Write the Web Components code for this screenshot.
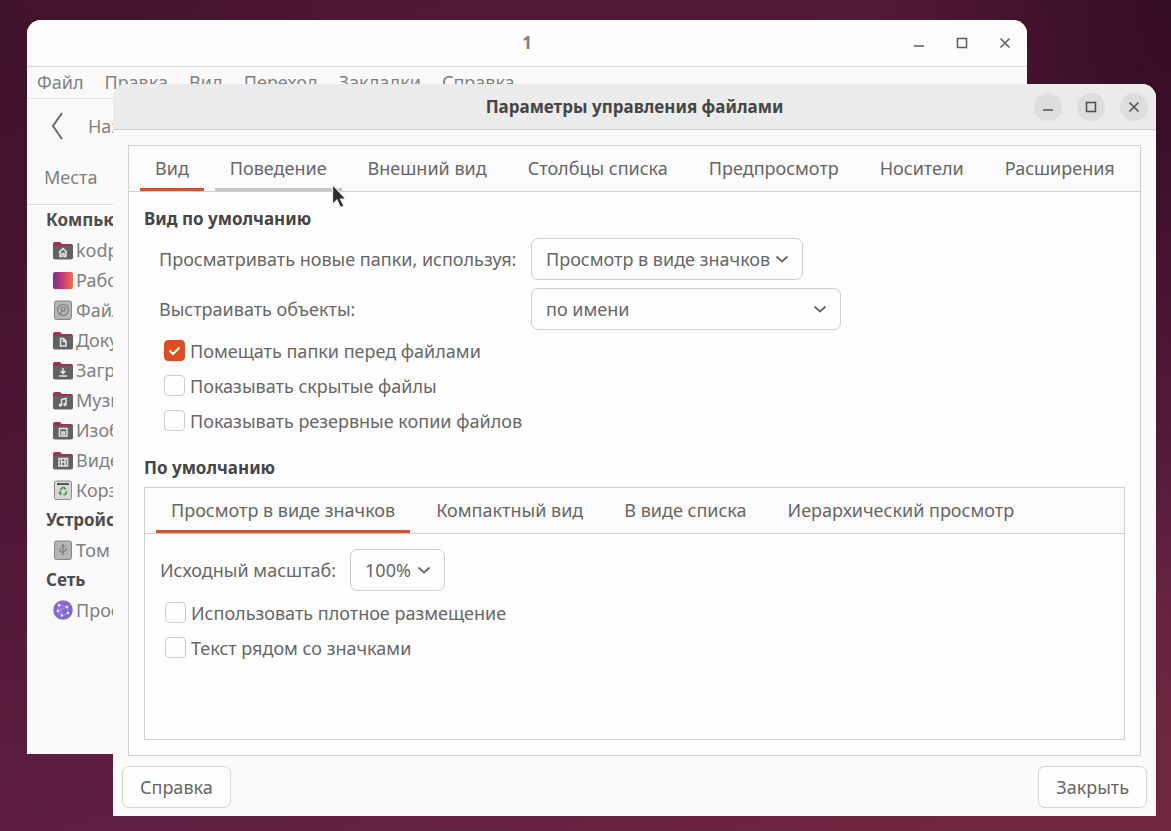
<!DOCTYPE html>
<html lang="ru">
<head>
<meta charset="utf-8">
<title>Параметры управления файлами</title>
<style>
  html, body { height: 100%; margin: 0; }
  body {
    overflow: hidden;
    font: 18px/24px "Noto Sans", "Open Sans", sans-serif;
    --heading-size: 17px;
    --ink: #666666;
    --ink-strong: #454545;
    --ink-back: #808080;
    --line: #d0d0d0;
    --accent: #c9553a;
    --check: #dd4f22;
    color: var(--ink);
  }
</style>
</head>
<body>
<ubuntu-desktop>
  <desktop-window class="back" heading="1">
    <menu-bar items="Файл|Правка|Вид|Переход|Закладки|Справка"></menu-bar>
    <nav-bar></nav-bar>
    <places-sidebar></places-sidebar>
  </desktop-window>
  <desktop-window class="front" heading="Параметры управления файлами" active>
    <prefs-dialog></prefs-dialog>
  </desktop-window>
  <mouse-pointer></mouse-pointer>
</ubuntu-desktop>

<script>
function element(name, render) {
  customElements.define(name, class extends HTMLElement {
    connectedCallback() {
      if (this.shadowRoot) return;
      const template = document.createElement('template');
      template.innerHTML = '<style>*{box-sizing:border-box}button,select,input{font:inherit;color:inherit}</style>' + render(this);
      this.attachShadow({ mode: 'open' }).append(template.content.cloneNode(true));
    }
  });
}

element('ubuntu-desktop', () => `
  <style>
    :host {
      display: block; position: relative; height: 100%; overflow: hidden;
      background:
        radial-gradient(ellipse 300px 600px at 100% 0, #2c0a1ecc, #2c0a1e00),
        radial-gradient(ellipse 420px 700px at 0 10%, #3a0f2aaa, #3a0f2a00),
        linear-gradient(160deg, #4d1735 0%, #55193a 40%, #5e1f42 70%, #74283e 100%);
    }
    ::slotted(.back) { position: absolute; left: 27px; top: 20px; right: 144px; bottom: 77px; color: var(--ink-back); }
    ::slotted(.front) { position: absolute; left: 113px; top: 84px; right: 15px; bottom: 15px; }
    ::slotted(mouse-pointer) { position: absolute; left: 331px; top: 183px; }
  </style>
  <slot></slot>`);

element('desktop-window', el => `
  <style>
    :host {
      display: flex; flex-direction: column; overflow: hidden;
      border-radius: 14px 14px 0 0; background: #fafafa;
    }
    header {
      flex: none; height: 47px; display: grid; grid-template-columns: 1fr auto 1fr;
      align-items: center; padding: 0 8px; border-bottom: 1px solid #d9d9d9; background: #fcfcfc;
    }
    :host([active]) header { height: 46px; background: #ebebeb; border-color: #cccccc; color: var(--ink-strong); }
    h1 { grid-column: 2; margin: 0; font-size: var(--heading-size); font-weight: 700; }
    .controls { justify-self: end; display: flex; gap: 15px; }
    button {
      width: 28px; height: 28px; padding: 0; border: 0; border-radius: 50%; background: none;
      display: grid; place-items: center; color: #5c5c5c;
    }
    :host([active]) button { background: #dddddd; color: #4c4c4c; }
    svg { width: 12px; height: 12px; fill: none; stroke: currentColor; stroke-width: 1.5; }
  </style>
  <header>
    <h1>${el.getAttribute('heading')}</h1>
    <div class="controls">
      <button aria-label="Свернуть"><svg viewBox="0 0 12 12"><path d="M1 9h10"/></svg></button>
      <button aria-label="Развернуть"><svg viewBox="0 0 12 12"><path d="M1.500 1.500h9v9h-9z"/></svg></button>
      <button aria-label="Закрыть окно"><svg viewBox="0 0 12 12"><path d="M1.500 1.500l9 9M10.500 1.500l-9 9"/></svg></button>
    </div>
  </header>
  <slot></slot>`);

element('menu-bar', el => `
  <style>
    :host { display: block; flex: none; border-bottom: 1px solid #e4e4e4; }
    nav { display: flex; gap: 21px; height: 31px; padding-left: 10px; }
    button { border: 0; padding: 0 0 2px; background: none; }
  </style>
  <nav>${el.getAttribute('items').split('|').map(t => `<button>${t}</button>`).join('')}</nav>`);

element('nav-bar', () => `
  <style>
    :host { display: block; flex: none; }
    button { display: flex; align-items: center; gap: 23px; height: 54px; padding: 0 0 0 24px; border: 0; background: none; }
    svg { width: 14px; height: 28px; fill: none; stroke: #6a6a6a; stroke-width: 2; }
  </style>
  <button><svg viewBox="0 0 14 28"><path d="M11 1L2 14l9 13"/></svg>Назад</button>`);

const folder = glyph => `
  <path d="M0 4a2 2 0 0 1 2-2h5l2 2h9a2 2 0 0 1 2 2v5H0z" fill="#9c3450"/>
  <rect x="0" y="6" width="20" height="13.500" rx="2" fill="#626262"/>
  <g fill="none" stroke="#e6e6e6" stroke-width="1.500">${glyph}</g>`;
const drive = glyph => `
  <rect x="1.500" y="1" width="17" height="18.500" rx="2" fill="#b5b5b5" stroke="#858585"/>
  <g fill="none" stroke="#7b7b7b" stroke-width="1.200">${glyph}</g>`;
const placeIcons = {
  home: folder('<path d="M6 12.500l4-4 4 4M7 12v4.500h2v-3h2v3h2V12"/>'),
  desktop: `<defs><linearGradient id="g"><stop stop-color="#77318f"/><stop offset=".45" stop-color="#c03a79"/><stop offset="1" stop-color="#f0714a"/></linearGradient></defs>
    <rect x="0" y="2" width="20" height="17" rx="2" fill="url(#g)"/>`,
  disk: drive('<circle cx="10" cy="10" r="5.500"/><circle cx="10" cy="9" r="2"/><path d="M9 11l-2 3"/>'),
  docs: folder('<path d="M7.500 8.500h3l2.500 2.500v5H7.500zM10.500 8.500v3H13"/>'),
  down: folder('<path d="M10 8v5M7.500 11l2.500 2.500 2.500-2.500M6 16h8"/>'),
  music: folder('<path d="M8.500 15V9.500l4.500-1V14"/><circle cx="7.500" cy="15" r="1"/><circle cx="12" cy="14.500" r="1"/>'),
  pics: folder('<path d="M6.500 8.500h7.500v7.500H6.500zM9 12h2.500v2H9z"/>'),
  video: folder('<path d="M6 8.500h8.500V16H6zM8.500 8.500V16M12 8.500V16M8.500 12H12"/>'),
  trash: `<rect x="1.500" y="1" width="17" height="18.500" rx="2" fill="#d7d9d6" stroke="#8b8b8b"/><path d="M4 4h12" stroke="#555" stroke-width="2"/>
    <path d="M7.500 10l2-2.500h1.500l1.500 2M13.500 11.500l-1 3h-2M8.500 14.500l-2-1.500 1-2" fill="none" stroke="#3d9a47" stroke-width="1.700"/>`,
  usb: drive('<path d="M10 15V5M8.500 6.500L10 4.500l1.500 2M10 13l-3-2V8.500M10 12l3-2V8"/>'),
  net: `<circle cx="10" cy="10" r="9.800" fill="#8469cf"/><path d="M6 5l8 2 1 6-6 3-5-5zM6 5l3 11M14 7l-9 4" fill="none" stroke="#a994e6"/>
    <g fill="#eee6ff"><circle cx="6" cy="5" r="1.300"/><circle cx="14" cy="7" r="1.300"/><circle cx="15" cy="13" r="1.300"/><circle cx="9" cy="15.500" r="1.300"/><circle cx="5" cy="11" r="1.300"/></g>`
};
element('place-item', el => `
  <style>
    :host { display: block; }
    a { display: flex; align-items: center; gap: 3px; height: 30px; padding-left: 26px; color: inherit; text-decoration: none; white-space: nowrap; }
    svg { flex: none; width: 20px; height: 20px; }
  </style>
  <a href="#"><svg viewBox="0 0 20 20">${placeIcons[el.getAttribute('icon')]}</svg><slot></slot></a>`);

element('places-sidebar', () => `
  <style>
    :host { display: block; width: 220px; }
    .head { height: 52px; padding: 12px 0 0 17px; border-bottom: 1px solid #d9d9d9; }
    h2 { height: 30px; margin: 0; padding-left: 19px; font-size: var(--heading-size); line-height: 30px; color: #4d4d4d; }
  </style>
  <div class="head">Места</div>
  <h2>Компьютер</h2>
  <place-item icon="home">kodp</place-item>
  <place-item icon="desktop">Рабочий</place-item>
  <place-item icon="disk">Файлы</place-item>
  <place-item icon="docs">Документы</place-item>
  <place-item icon="down">Загрузки</place-item>
  <place-item icon="music">Музыка</place-item>
  <place-item icon="pics">Изображения</place-item>
  <place-item icon="video">Видео</place-item>
  <place-item icon="trash">Корзина</place-item>
  <h2>Устройства</h2>
  <place-item icon="usb">Том</place-item>
  <h2>Сеть</h2>
  <place-item icon="net">Просмотр</place-item>`);

element('tab-book', el => `
  <style>
    :host { display: flex; flex-direction: column; border: 1px solid var(--line); background: #fefefe; }
    [role=tablist] { flex: none; display: flex; gap: 11px; height: 46px; padding: 0 11px; border-bottom: 1px solid var(--line); background: #fbfbfb; }
    button { flex: none; padding: 2px 15px 0; border: 0; border-bottom: 3px solid transparent; background: none; white-space: nowrap; }
    button[aria-selected=true] { border-color: var(--accent); }
    button.hover { border-color: #c6c6c6; }
    .page { flex: 1; display: flex; flex-direction: column; padding: 15px; }
  </style>
  <div role="tablist">${el.getAttribute('tabs').split('|').map((t, i) =>
    `<button role="tab" aria-selected="${i === 0}" class="${String(i) === el.getAttribute('hover') ? 'hover' : ''}">${t}</button>`).join('')}</div>
  <div class="page" role="tabpanel"><slot></slot></div>`);

element('choice-field', el => `
  <style>
    :host { display: flex; align-items: center; height: 42px; gap: 14px; }
    label { min-width: var(--label-width, 0); white-space: nowrap; }
    .box { position: relative; width: var(--box-width); height: 42px; }
    select {
      appearance: none; width: 100%; height: 100%; margin: 0; padding: 0 14px;
      border: 1px solid #cdcdcd; border-radius: 7px; background: #fefefe;
    }
    svg { position: absolute; right: 14px; top: 14px; width: 14px; height: 14px; fill: none; stroke: currentColor; stroke-width: 1.700; pointer-events: none; }
  </style>
  <label for="s">${el.getAttribute('label')}</label>
  <div class="box"><select id="s"><option>${el.getAttribute('value')}</option></select>
  <svg viewBox="0 0 14 14"><path d="M1.500 4.500L7 9.500l5.500-5"/></svg></div>`);

element('check-field', el => `
  <style>
    :host { display: block; }
    label { display: flex; align-items: center; gap: 5px; height: 35px; }
    input {
      appearance: none; flex: none; width: 21px; height: 21px; margin: 0;
      border: 1px solid #cccccc; border-radius: 4px; background: #fefefe;
    }
    input:checked {
      border-color: var(--check);
      background: var(--check) url("data:image/svg+xml,%3Csvg xmlns='http://www.w3.org/2000/svg' viewBox='0 0 17 17'%3E%3Cpath d='M3.500 8.500l3.500 3.500 6.500-6.500' fill='none' stroke='white' stroke-width='2'/%3E%3C/svg%3E") center / 17px no-repeat;
    }
  </style>
  <label><input type="checkbox" ${el.hasAttribute('checked') ? 'checked' : ''}><span><slot></slot></span></label>`);

element('prefs-dialog', () => `
  <style>
    :host { flex: 1; display: flex; flex-direction: column; padding: 15px 9px 8px; }
    tab-book.main { flex: 1; margin: 0 6px; }
    h2 { margin: 0 0 7px; font-size: var(--heading-size); font-weight: 700; color: var(--ink-strong); }
    .fields { display: flex; flex-direction: column; gap: 8px; padding-left: 15px; --label-width: 358px; }
    .wide { --box-width: 272px; }
    .wider { --box-width: 310px; }
    .zoom { --box-width: 95px; }
    .checks { padding: 3px 0 18px 20px; }
    .inner { flex: 1; }
    .inner .checks { padding: 4px 0 0 5px; }
    footer { display: flex; justify-content: space-between; padding-top: 10px; }
    footer button { height: 42px; padding: 0 17px; border: 1px solid #d2d2d2; border-radius: 7px; background: #fefefe; }
  </style>
  <tab-book class="main" tabs="Вид|Поведение|Внешний вид|Столбцы списка|Предпросмотр|Носители|Расширения" hover="1">
    <h2>Вид по умолчанию</h2>
    <div class="fields">
      <choice-field class="wide" label="Просматривать новые папки, используя:" value="Просмотр в виде значков"></choice-field>
      <choice-field class="wider" label="Выстраивать объекты:" value="по имени"></choice-field>
    </div>
    <div class="checks">
      <check-field checked>Помещать папки перед файлами</check-field>
      <check-field>Показывать скрытые файлы</check-field>
      <check-field>Показывать резервные копии файлов</check-field>
    </div>
    <h2>По умолчанию</h2>
    <tab-book class="inner" tabs="Просмотр в виде значков|Компактный вид|В виде списка|Иерархический просмотр">
      <choice-field class="zoom" label="Исходный масштаб:" value="100%"></choice-field>
      <div class="checks">
        <check-field>Использовать плотное размещение</check-field>
        <check-field>Текст рядом со значками</check-field>
      </div>
    </tab-book>
  </tab-book>
  <footer><button>Справка</button><button>Закрыть</button></footer>`);

element('mouse-pointer', () => `
  <style>:host { display: block; pointer-events: none; } svg { display: block; width: 16px; height: 26px; }</style>
  <svg viewBox="0 0 16 26"><path d="M1.500 1.500v20l4.500-4.500 3.500 7.500 3.500-1.500-3.500-7h5.500z" fill="#2e2e2e" stroke="#f2f2f2" stroke-width="1.200"/></svg>`);
</script>
</body>
</html>
